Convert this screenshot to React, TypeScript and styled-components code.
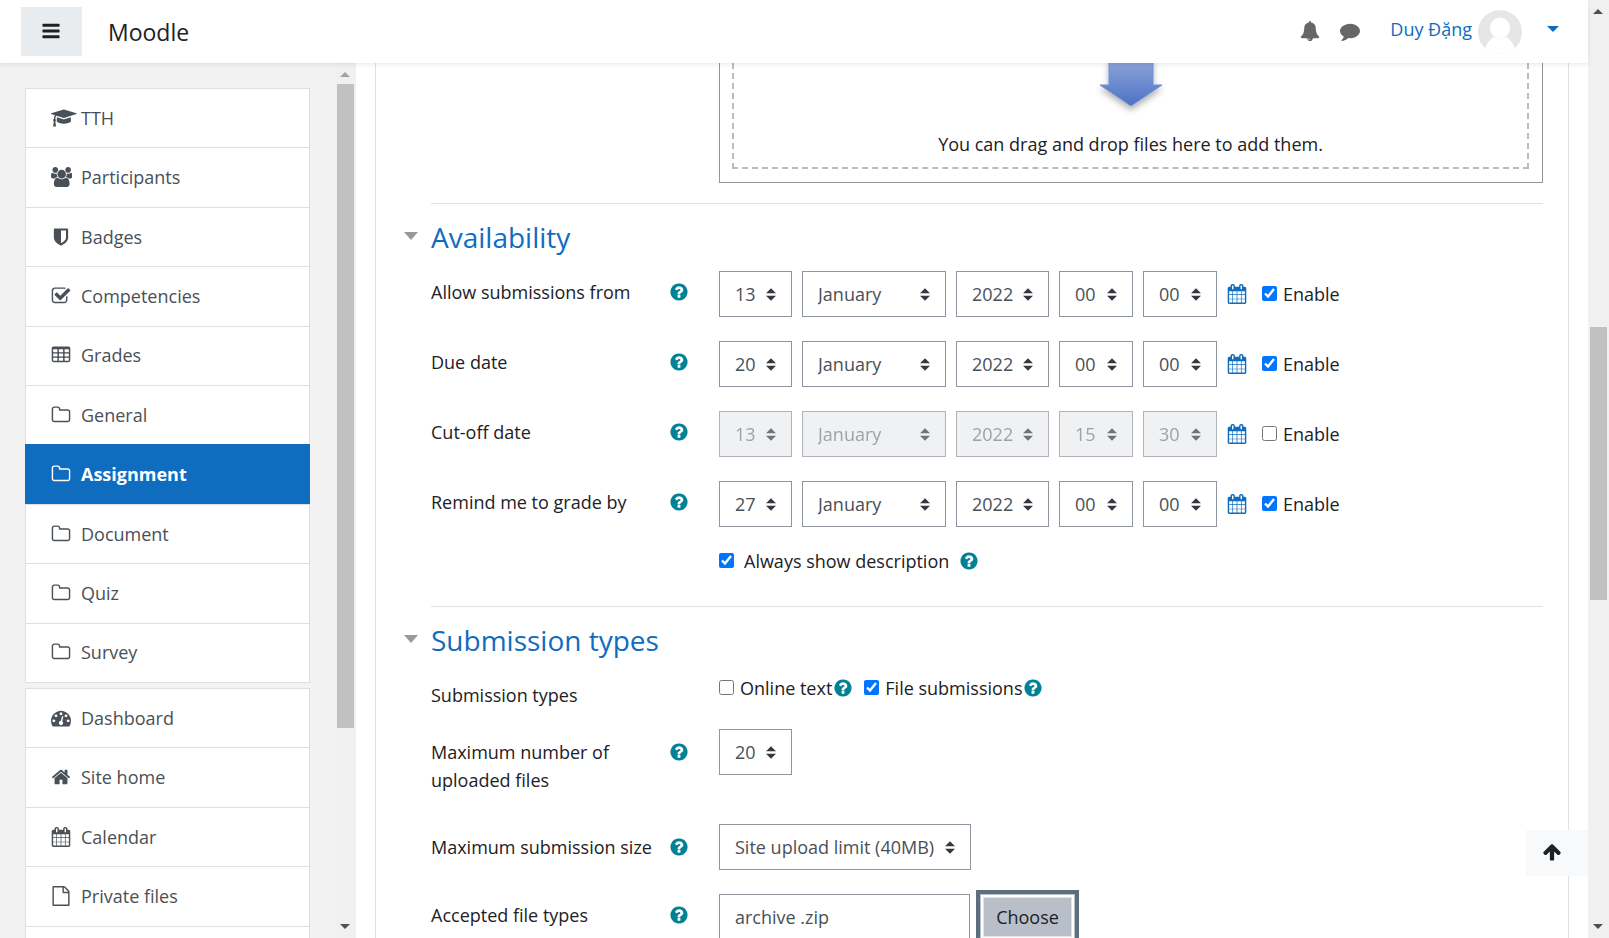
import React from 'react';
import styled, { createGlobalStyle, css } from 'styled-components';

const GlobalStyle = createGlobalStyle`
  *, *::before, *::after { box-sizing: border-box; }
  body {
    margin: 0;
    background: #fff;
    color: #1d2125;
    font-family: "Open Sans", "Noto Sans", sans-serif;
    font-size: 18px;
    font-weight: 380;
    line-height: 28px;
  }
  button, input, select { font: inherit; color: inherit; }
`;

/* ---------- icons ---------- */

type Glyph = { w?: number; d: string };

const glyphs: Record<string, Glyph> = {
  cap: {
    w: 2304,
    d: 'M1774 836l18 316q4 69-82 128t-235 93.5-323 34.5-323-34.5-235-93.5-82-128l18-316 574 181q22 7 48 7t48-7zm530-324q0 23-22 31l-1120 352q-4 1-10 1t-10-1l-652-206q-43 34-71 111.5t-34 178.5q63 36 63 109 0 69-58 107l58 433q2 14-8 25-9 11-24 11h-192q-15 0-24-11-10-11-8-25l58-433q-58-38-58-107 0-73 65-111 11-207 98-330l-333-104q-22-8-22-31t22-31l1120-352q4-1 10-1t10 1l1120 352q22 8 22 31z',
  },
  users: {
    w: 1920,
    d: 'M593 896q-162 5-265 128h-134q-82 0-138-40.5t-56-118.5q0-353 124-353 6 0 43.5 21t97.5 42.5 119 21.5q67 0 133-23-5 37-5 66 0 139 81 256zm1071 637q0 120-73 189.5t-194 69.5h-874q-121 0-194-69.5t-73-189.5q0-53 3.5-103.5t14-109 26.5-108.5 43-97.5 62-81 85.5-53.5 111.5-20q10 0 43 21.5t73 48 107 48 135 21.5 135-21.5 107-48 73-48 43-21.5q61 0 111.5 20t85.5 53.5 62 81 43 97.5 26.5 108.5 14 109 3.5 103.5zm-1024-1277q0 106-75 181t-181 75-181-75-75-181 75-181 181-75 181 75 75 181zm704 384q0 159-112.5 271.5t-271.5 112.5-271.5-112.5-112.5-271.5 112.5-271.5 271.5-112.5 271.5 112.5 112.5 271.5zm576 225q0 78-56 118.5t-138 40.5h-134q-103-123-265-128 81-117 81-256 0-29-5-66 66 23 133 23 59 0 119-21.5t97.5-42.5 43.5-21q124 0 124 353zm-128-609q0 106-75 181t-181 75-181-75-75-181 75-181 181-75 181 75 75 181z',
  },
  shield: {
    d: 'M1344 960v-640h-448v1137q119-63 213-137 235-184 235-360zm192-768v768q0 86-33.5 170.5t-83 150-118 127.5-126.5 103-121 77.5-89.5 49.5-42.5 20q-12 6-26 6t-26-6q-16-7-42.5-20t-89.5-49.5-121-77.5-126.5-103-118-127.5-83-150-33.5-170.5v-768q0-26 19-45t45-19h1152q26 0 45 19t19 45z',
  },
  check: {
    d: 'M1472 930v318q0 119-84.5 203.5t-203.5 84.5h-832q-119 0-203.5-84.5t-84.5-203.5v-832q0-119 84.5-203.5t203.5-84.5h832q63 0 117 25 15 7 18 23 3 17-9 29l-49 49q-10 10-23 10-3 0-9-2-23-6-45-6h-832q-66 0-113 47t-47 113v832q0 66 47 113t113 47h832q66 0 113-47t47-113v-254q0-13 9-22l64-64q10-10 23-10 6 0 12 3 20 8 20 29zm231-489l-814 814q-24 24-57 24t-57-24l-430-430q-24-24-24-57t24-57l110-110q24-24 57-24t57 24l263 263 647-647q24-24 57-24t57 24l110 110q24 24 24 57t-24 57z',
  },
  table: {
    d: 'M576 1376v-192q0-14-9-23t-23-9h-320q-14 0-23 9t-9 23v192q0 14 9 23t23 9h320q14 0 23-9t9-23zm0-384v-192q0-14-9-23t-23-9h-320q-14 0-23 9t-9 23v192q0 14 9 23t23 9h320q14 0 23-9t9-23zm512 384v-192q0-14-9-23t-23-9h-320q-14 0-23 9t-9 23v192q0 14 9 23t23 9h320q14 0 23-9t9-23zm-512-768v-192q0-14-9-23t-23-9h-320q-14 0-23 9t-9 23v192q0 14 9 23t23 9h320q14 0 23-9t9-23zm512 384v-192q0-14-9-23t-23-9h-320q-14 0-23 9t-9 23v192q0 14 9 23t23 9h320q14 0 23-9t9-23zm512 384v-192q0-14-9-23t-23-9h-320q-14 0-23 9t-9 23v192q0 14 9 23t23 9h320q14 0 23-9t9-23zm-512-768v-192q0-14-9-23t-23-9h-320q-14 0-23 9t-9 23v192q0 14 9 23t23 9h320q14 0 23-9t9-23zm512 384v-192q0-14-9-23t-23-9h-320q-14 0-23 9t-9 23v192q0 14 9 23t23 9h320q14 0 23-9t9-23zm0-384v-192q0-14-9-23t-23-9h-320q-14 0-23 9t-9 23v192q0 14 9 23t23 9h320q14 0 23-9t9-23zm128-320v1088q0 66-47 113t-113 47h-1344q-66 0-113-47t-47-113v-1088q0-66 47-113t113-47h1344q66 0 113 47t47 113z',
  },
  folder: {
    d: 'M1600 1312v-704q0-40-28-68t-68-28h-704q-40 0-68-28t-28-68v-64q0-40-28-68t-68-28h-320q-40 0-68 28t-28 68v960q0 40 28 68t68 28h1216q40 0 68-28t28-68zm128-704v704q0 92-66 158t-158 66h-1216q-92 0-158-66t-66-158v-960q0-92 66-158t158-66h320q92 0 158 66t66 158v32h672q92 0 158 66t66 158z',
  },
  gauge: {
    d: 'M384 1152q0-53-37.5-90.5t-90.5-37.5-90.5 37.5-37.5 90.5 37.5 90.5 90.5 37.5 90.5-37.5 37.5-90.5zm192-448q0-53-37.5-90.5t-90.5-37.5-90.5 37.5-37.5 90.5 37.5 90.5 90.5 37.5 90.5-37.5 37.5-90.5zm428 481l101-382q6-26-7.5-48.5t-38.5-29.5-48 6.5-30 39.5l-101 382q-60 5-107 43.5t-63 98.5q-20 77 20 146t117 89 146-20 89-117q16-60-6-117t-72-91zm660-33q0-53-37.5-90.5t-90.5-37.5-90.5 37.5-37.5 90.5 37.5 90.5 90.5 37.5 90.5-37.5 37.5-90.5zm-640-640q0-53-37.5-90.5t-90.5-37.5-90.5 37.5-37.5 90.5 37.5 90.5 90.5 37.5 90.5-37.5 37.5-90.5zm448 192q0-53-37.5-90.5t-90.5-37.5-90.5 37.5-37.5 90.5 37.5 90.5 90.5 37.5 90.5-37.5 37.5-90.5zm320 448q0 261-141 483-19 29-54 29h-1402q-35 0-54-29-141-221-141-483 0-182 71-348t191-286 286-191 348-71 348 71 286 191 191 286 71 348z',
  },
  home: {
    d: 'M1472 992v480q0 26-19 45t-45 19h-384v-384h-256v384h-384q-26 0-45-19t-19-45v-480q0-1 .5-3t.5-3l575-474 575 474q1 2 1 6zm223-69l-62 74q-8 9-21 11h-3q-13 0-21-7l-692-577-692 577q-12 8-24 7-13-2-21-11l-62-74q-8-10-7-23.5t11-21.5l719-599q32-26 76-26t76 26l244 204v-195q0-14 9-23t23-9h192q14 0 23 9t9 23v408l219 182q10 8 11 21.5t-7 23.5z',
  },
  calendar: {
    d: 'M192 1664h288v-288h-288v288zm352 0h320v-288h-320v288zm-352-352h288v-320h-288v320zm352 0h320v-320h-320v320zm-352-384h288v-288h-288v288zm736 736h320v-288h-320v288zm-384-736h320v-288h-320v288zm768 736h288v-288h-288v288zm-384-352h320v-320h-320v320zm-352-864v-288q0-13-9.5-22.5t-22.5-9.5h-64q-13 0-22.5 9.5t-9.5 22.5v288q0 13 9.5 22.5t22.5 9.5h64q13 0 22.5-9.5t9.5-22.5zm736 864h288v-320h-288v320zm-384-384h320v-288h-320v288zm384 0h288v-288h-288v288zm32-480v-288q0-13-9.5-22.5t-22.5-9.5h-64q-13 0-22.5 9.5t-9.5 22.5v288q0 13 9.5 22.5t22.5 9.5h64q13 0 22.5-9.5t9.5-22.5zm384-64v1280q0 52-38 90t-90 38h-1408q-52 0-90-38t-38-90v-1280q0-52 38-90t90-38h128v-96q0-66 47-113t113-47h64q66 0 113 47t47 113v96h384v-96q0-66 47-113t113-47h64q66 0 113 47t47 113v96h128q52 0 90 38t38 90z',
  },
  file: {
    d: 'M1596 380q28 28 48 76t20 88v1152q0 40-28 68t-68 28h-1344q-40 0-68-28t-28-68v-1600q0-40 28-68t68-28h896q40 0 88 20t76 48zm-444-244v376h376q-10-29-22-41l-313-313q-12-12-41-22zm384 1528v-1024h-416q-40 0-68-28t-28-68v-416h-768v1536h1280z',
  },
  bars: {
    d: 'M1664 1344v128q0 26-19 45t-45 19h-1408q-26 0-45-19t-19-45v-128q0-26 19-45t45-19h1408q26 0 45 19t19 45zm0-512v128q0 26-19 45t-45 19h-1408q-26 0-45-19t-19-45v-128q0-26 19-45t45-19h1408q26 0 45 19t19 45zm0-512v128q0 26-19 45t-45 19h-1408q-26 0-45-19t-19-45v-128q0-26 19-45t45-19h1408q26 0 45 19t19 45z',
  },
  bell: {
    d: 'M912 1696q0-16-16-16-59 0-101.5-42.5t-42.5-101.5q0-16-16-16t-16 16q0 73 51.5 124.5t124.5 51.5q16 0 16-16zm816-288q0 52-38 90t-90 38h-448q0 106-75 181t-181 75-181-75-75-181h-448q-52 0-90-38t-38-90q50-42 91-88t85-119.5 74.5-158.5 50-206 19.5-260q0-152 117-282.5t307-158.5q-8-19-8-39 0-40 28-68t68-28 68 28 28 68q0 20-8 39 190 28 307 158.5t117 282.5q0 139 19.5 260t50 206 74.5 158.5 85 119.5 91 88z',
  },
  comment: {
    d: 'M1792 896q0 174-120 321.5t-326 233-450 85.5q-70 0-145-8-198 175-460 242-49 14-114 22-17 2-30.5-9t-17.5-29v-1q-3-4-.5-12t2-10 4.5-9.5l6-9 7-8.5 8-9q7-8 31-34.5t34.5-38 31-39.5 32.5-51 27-59 26-76q-157-89-247.5-220t-90.5-281q0-130 71-248.5t191-204.5 286-136.5 348-50.5q244 0 450 85.5t326 233 120 321.5z',
  },
  help: {
    d: 'M1024 1376v-192q0-14-9-23t-23-9h-192q-14 0-23 9t-9 23v192q0 14 9 23t23 9h192q14 0 23-9t9-23zm256-672q0-88-55.5-163t-138.5-116-170-41q-243 0-371 213-15 24 8 42l132 100q7 6 19 6 16 0 25-12 53-68 86-92 34-24 86-24 48 0 85.5 26t37.5 59q0 38-20 61t-68 45q-63 28-115.5 86.5t-52.5 125.5v36q0 14 9 23t23 9h192q14 0 23-9t9-23q0-19 21.5-49.5t54.5-49.5q32-18 49-28.5t46-35 44.5-48 28-60.5 12.5-81zm384 192q0 209-103 385.5t-279.5 279.5-385.5 103-385.5-103-279.5-279.5-103-385.5 103-385.5 279.5-279.5 385.5-103 385.5 103 279.5 279.5 103 385.5z',
  },
  up: {
    d: 'M1675 971q0 51-37 90l-75 75q-38 38-91 38-54 0-90-38l-294-293v704q0 52-37.5 84.5t-90.5 32.5h-128q-53 0-90.5-32.5t-37.5-84.5v-704l-294 293q-36 38-90 38t-90-38l-75-75q-38-38-38-90 0-53 38-91l651-651q35-37 90-37 54 0 91 37l651 651q37 39 37 91z',
  },
};

const Svg = styled.svg`
  display: block;
  height: 20px;
  flex: none;
  fill: currentColor;
`;

function Icon({ name }: { name: string }) {
  const g = glyphs[name];
  return (
    <Svg viewBox={`0 0 ${g.w ?? 1792} 1792`} aria-hidden="true">
      <path d={g.d} />
    </Svg>
  );
}

/* ---------- shell ---------- */

const Shell = styled.div`
  display: grid;
  grid-template-columns: minmax(0, 1fr) 21px;
  height: 100vh;
  overflow: hidden;
`;

const Page = styled.div`
  display: flex;
  flex-direction: column;
  min-height: 0;
`;

const Header = styled.header`
  position: relative;
  z-index: 2;
  display: flex;
  align-items: center;
  flex: none;
  height: 63px;
  padding: 0 29px 0 21px;
  background: #fff;
  box-shadow: 0 2px 4px rgba(0, 0, 0, 0.08);
`;

const MenuButton = styled.button`
  display: grid;
  place-items: center;
  width: 61px;
  height: 49px;
  padding: 0 1px 1px 0;
  border: 0;
  background: #e9ecef;
  cursor: pointer;
`;

const Brand = styled.a`
  margin-left: 26px;
  font-size: 23px;
  line-height: 30px;
  color: #1d2125;
  text-decoration: none;
`;

const HeaderTools = styled.div`
  display: flex;
  align-items: center;
  gap: 20px;
  margin-left: auto;
`;

const IconButton = styled.button`
  display: block;
  padding: 0 0 1px;
  border: 0;
  background: none;
  color: #666;
  cursor: pointer;
`;

const UserButton = styled.button`
  display: flex;
  align-items: center;
  gap: 6px;
  margin-left: 10px;
  padding: 0;
  border: 0;
  background: none;
  color: #0f6cbf;
  cursor: pointer;
`;

const UserName = styled.span`
  padding-bottom: 5px;
`;

const Avatar = styled.svg`
  display: block;
  width: 44px;
  height: 44px;
`;

const Caret = styled.span`
  margin: 0 0 6px 19px;
  border: 6px solid transparent;
  border-top-color: currentColor;
  border-bottom: 0;
`;

const Body = styled.div`
  display: grid;
  grid-template-columns: 335px 21px minmax(0, 1fr);
  flex: 1;
  min-height: 0;
  overflow: hidden;
`;

/* ---------- scroll bars ---------- */

const Track = styled.div`
  display: flex;
  flex-direction: column;
  align-items: center;
  min-height: 0;
  padding: 9px 1px 9px 0;
  background: #f0f0f0;
`;

const Arrow = styled.span<{ $down?: boolean; $dim?: boolean }>`
  flex: none;
  border: 5px solid transparent;
  ${(p) =>
    p.$down
      ? css`
          margin-top: auto;
          border-bottom: 0;
          border-top-color: #505050;
        `
      : css`
          border-top: 0;
          border-bottom-color: ${p.$dim ? '#a3a3a3' : '#505050'};
        `}
`;

const Thumb = styled.div<{ $start: number; $size: number }>`
  flex: none;
  width: 17px;
  height: ${(p) => p.$size}vh;
  margin-top: ${(p) => p.$start}px;
  background: #c1c1c1;
`;

/* ---------- sidebar ---------- */

const Sidebar = styled.nav`
  display: flex;
  flex-direction: column;
  gap: 5px;
  min-height: 0;
  overflow: hidden;
  padding: 25px 25px 0;
  background: #f2f2f2;
`;

const NavList = styled.ul<{ $height: number }>`
  display: flex;
  flex-direction: column;
  flex: none;
  min-height: ${(p) => p.$height}px;
  margin: 0;
  padding: 0 0 1px;
  list-style: none;
  background: #dfdfdf;
`;

const NavItem = styled.li<{ $active?: boolean }>`
  display: flex;
  flex: 1;
  border: 1px solid ${(p) => (p.$active ? '#0f6cbf' : '#dfdfdf')};
  border-bottom: 0;
  background: ${(p) => (p.$active ? '#0f6cbf' : '#fff')};
  color: ${(p) => (p.$active ? '#fff' : '#495057')};
  font-weight: ${(p) => (p.$active ? 700 : 'inherit')};
`;

const NavLink = styled.a`
  display: flex;
  align-items: center;
  flex: 1;
  gap: 10px;
  padding: 0 25px 1px;
  color: inherit;
  text-decoration: none;
`;

const NavIcon = styled.span`
  display: flex;
  justify-content: safe center;
  width: 20px;
`;

/* ---------- form ---------- */

const Main = styled.main`
  position: relative;
  min-height: 0;
  overflow: hidden;
  padding: 0 19px;
  background: #fff;
`;

const Card = styled.form`
  min-height: 100%;
  padding: 0 25px 0 55px;
  border: 1px solid #dee2e6;
  border-width: 0 1px;
`;

const FormRow = styled.div<{ $tight?: boolean }>`
  display: grid;
  grid-template-columns: 258px minmax(0, 1fr);
  column-gap: 30px;
  align-items: start;
  margin-bottom: ${(p) => (p.$tight ? 20 : 24)}px;
`;

const labelPadding = {
  normal: '7px 0',
  tight: '7px 0 0',
  low: '9px 0 6px',
};

const LabelCell = styled.div<{ $fit?: keyof typeof labelPadding }>`
  display: flex;
  justify-content: space-between;
  gap: 10px;
  padding: ${(p) => labelPadding[p.$fit ?? 'normal']};
`;

const HelpButton = styled.button`
  display: flex;
  align-items: center;
  flex: none;
  height: 28px;
  padding: 0;
  border: 0;
  background: none;
  color: #008196;
  cursor: pointer;
`;

const Controls = styled.div<{ $gap?: number }>`
  grid-column: 2;
  display: flex;
  align-items: center;
  gap: ${(p) => p.$gap ?? 10}px;
`;

const chevrons = `url("data:image/svg+xml,${encodeURIComponent(
  "<svg xmlns='http://www.w3.org/2000/svg' width='4' height='5' viewBox='0 0 4 5'><path fill='#343a40' d='M2 0L0 2h4zm0 5L0 3h4z'/></svg>"
)}")`;

const Select = styled.select<{ $width: number }>`
  appearance: none;
  width: ${(p) => p.$width}px;
  height: 46px;
  padding: 0 15px;
  border: 1px solid #8f959e;
  border-radius: 0;
  background: #fff ${chevrons} no-repeat right 15px center / 10px 13px;
  color: #495057;

  &:disabled {
    opacity: 0.7;
    background-color: #e9ecef;
    color: #747b83;
  }
`;

const CalendarLink = styled.a`
  display: block;
  color: #0f6cbf;
`;

const CheckLabel = styled.label<{ $gap?: number; $indent?: number }>`
  display: flex;
  align-items: center;
  gap: ${(p) => p.$gap ?? 6}px;
  margin-left: ${(p) => p.$indent ?? 0}px;
`;

const Checkbox = styled.input.attrs({ type: 'checkbox' })`
  width: 15px;
  height: 15px;
  margin: 0 0 2px;
`;

const Picker = styled.div`
  grid-column: 2;
  height: 120px;
  padding: 0 13px 13px 12px;
  border: 1px solid #8f959e;
  border-top: 0;
`;

const DropZone = styled.div`
  display: flex;
  flex-direction: column;
  align-items: center;
  justify-content: space-between;
  height: 100%;
  padding-bottom: 9px;
  border: 2px dashed #bbb;
  border-top: 0;
`;

const DropArrow = styled.svg`
  display: block;
  width: 72px;
  height: 56px;
`;

const Section = styled.fieldset`
  min-width: 0;
  margin: 0;
  padding: 16px 0 7px;
  border: 0;
  border-top: 1px solid #dee2e6;
`;

const Heading = styled.h3`
  display: flex;
  align-items: center;
  margin: 0 0 17px -27px;
  font-size: 28px;
  font-weight: 400;
  line-height: 34px;
`;

const HeadingLink = styled.a`
  display: flex;
  align-items: center;
  gap: 13px;
  color: #0f6cbf;
  text-decoration: none;

  &::before {
    content: '';
    margin-bottom: 2px;
    border: 8px solid transparent;
    border-width: 8px 7px 0;
    border-top-color: #999;
  }
`;

const TextInput = styled.input`
  width: 251px;
  height: 46px;
  padding: 0 15px;
  border: 1px solid #8f959e;
  color: #495057;
`;

const ChooseButton = styled.button`
  width: 95px;
  height: 46px;
  padding: 0;
  border: 1px solid #b8bfc9;
  background: #b8bfc9;
  color: #1d2125;
  box-shadow: 0 0 0 4px #5d6e7f, inset 0 0 0 2px #fff, inset 0 0 0 3px #dfe3e8;
`;

const TopButton = styled.button`
  position: absolute;
  right: 0;
  bottom: 62px;
  display: grid;
  place-items: center;
  width: 62px;
  height: 46px;
  padding: 0 11px 2px 0;
  border: 0;
  background: #f8f9fa;
  color: #1d2125;
`;

const courseItems = [
  ['cap', 'TTH'],
  ['users', 'Participants'],
  ['shield', 'Badges'],
  ['check', 'Competencies'],
  ['table', 'Grades'],
  ['folder', 'General'],
  ['folder', 'Assignment'],
  ['folder', 'Document'],
  ['folder', 'Quiz'],
  ['folder', 'Survey'],
];

const siteItems = [
  ['gauge', 'Dashboard'],
  ['home', 'Site home'],
  ['calendar', 'Calendar'],
  ['file', 'Private files'],
];

const dates = [
  { label: 'Allow submissions from', values: ['13', 'January', '2022', '00', '00'], on: true },
  { label: 'Due date', values: ['20', 'January', '2022', '00', '00'], on: true },
  { label: 'Cut-off date', values: ['13', 'January', '2022', '15', '30'], on: false },
  { label: 'Remind me to grade by', values: ['27', 'January', '2022', '00', '00'], on: true },
];

const dateParts = [
  { name: 'day', width: 73 },
  { name: 'month', width: 144 },
  { name: 'year', width: 93 },
  { name: 'hour', width: 74 },
  { name: 'minute', width: 74 },
];

function NavEntry({ icon, text }: { icon: string; text: string }) {
  return (
    <NavItem $active={text === 'Assignment'}>
      <NavLink href="#">
        <NavIcon>
          <Icon name={icon} />
        </NavIcon>
        {text}
      </NavLink>
    </NavItem>
  );
}

function Help({ topic }: { topic: string }) {
  return (
    <HelpButton type="button" aria-label={`Help with ${topic}`}>
      <Icon name="help" />
    </HelpButton>
  );
}

function DateRow({ label, values, on, last }: { label: string; values: string[]; on: boolean; last: boolean }) {
  const [enabled, setEnabled] = React.useState(on);
  return (
    <FormRow $tight={last}>
      <LabelCell>
        <span>{label}</span>
        <Help topic={label} />
      </LabelCell>
      <Controls>
        {dateParts.map((part, i) => (
          <Select key={part.name} $width={part.width} disabled={!enabled} aria-label={`${label} ${part.name}`}>
            <option>{values[i]}</option>
          </Select>
        ))}
        <CalendarLink href="#" aria-label={`${label} calendar`}>
          <Icon name="calendar" />
        </CalendarLink>
        <CheckLabel $indent={5}>
          <Checkbox checked={enabled} onChange={() => setEnabled(!enabled)} />
          Enable
        </CheckLabel>
      </Controls>
    </FormRow>
  );
}

export default function App() {
  return (
    <Shell>
      <GlobalStyle />
      <Page>
        <Header>
          <MenuButton type="button" aria-label="Side panel">
            <Icon name="bars" />
          </MenuButton>
          <Brand href="#">Moodle</Brand>
          <HeaderTools>
            <IconButton type="button" aria-label="Notifications">
              <Icon name="bell" />
            </IconButton>
            <IconButton type="button" aria-label="Messages">
              <Icon name="comment" />
            </IconButton>
            <UserButton type="button">
              <UserName>Duy Đặng</UserName>
              <Avatar viewBox="0 0 44 44" aria-hidden="true">
                <defs>
                  <clipPath id="avatar-clip">
                    <circle cx="22" cy="22" r="22" />
                  </clipPath>
                </defs>
                <g clipPath="url(#avatar-clip)">
                  <rect width="44" height="44" fill="#e6e6e6" />
                  <ellipse cx="22" cy="18" rx="10" ry="10.500" fill="#fff" />
                  <path d="M7 39q2-8 9-12 6 3 12 0 7 4 9 12v5H7z" fill="#fff" />
                </g>
              </Avatar>
              <Caret />
            </UserButton>
          </HeaderTools>
        </Header>

        <Body>
          <Sidebar aria-label="Navigation">
            <NavList $height={595}>
              {courseItems.map(([icon, text]) => (
                <NavEntry key={text} icon={icon} text={text} />
              ))}
            </NavList>
            <NavList $height={298}>
              {siteItems.map(([icon, text]) => (
                <NavEntry key={text} icon={icon} text={text} />
              ))}
              <NavItem />
            </NavList>
          </Sidebar>
          <Track aria-hidden="true">
            <Arrow $dim />
            <Thumb $start={7} $size={68.66} />
            <Arrow $down />
          </Track>

          <Main>
            <Card>
              <FormRow $tight>
                <Picker>
                  <DropZone>
                    <DropArrow viewBox="0 0 72 56" aria-hidden="true">
                      <defs>
                        <linearGradient id="drop-fill" x1="0" y1="0" x2="0" y2="1">
                          <stop offset="0" stopColor="#8ea4d8" />
                          <stop offset="1" stopColor="#4d73c6" />
                        </linearGradient>
                        <filter id="drop-shadow" x="-20%" y="-20%" width="140%" height="150%">
                          <feDropShadow dx="0" dy="4" stdDeviation="3" floodOpacity="0.3" />
                        </filter>
                      </defs>
                      <path
                        d="M14-4h44v26h9L36 43 5 22h9z"
                        fill="url(#drop-fill)"
                        stroke="#6f8fd6"
                        filter="url(#drop-shadow)"
                      />
                    </DropArrow>
                    <span>You can drag and drop files here to add them.</span>
                  </DropZone>
                </Picker>
              </FormRow>

              <Section>
                <Heading>
                  <HeadingLink href="#">Availability</HeadingLink>
                </Heading>
                {dates.map((d, i) => (
                  <DateRow key={d.label} {...d} last={i === dates.length - 1} />
                ))}
                <FormRow>
                  <Controls>
                    <CheckLabel $gap={10}>
                      <Checkbox defaultChecked />
                      Always show description
                    </CheckLabel>
                    <Help topic="Always show description" />
                  </Controls>
                </FormRow>
              </Section>

              <Section>
                <Heading>
                  <HeadingLink href="#">Submission types</HeadingLink>
                </Heading>
                <FormRow $tight>
                  <LabelCell $fit="tight">
                    <span>Submission types</span>
                  </LabelCell>
                  <Controls $gap={1}>
                    <CheckLabel>
                      <Checkbox />
                      Online text
                    </CheckLabel>
                    <Help topic="Online text" />
                    <CheckLabel $indent={10}>
                      <Checkbox defaultChecked />
                      File submissions
                    </CheckLabel>
                    <Help topic="File submissions" />
                  </Controls>
                </FormRow>
                <FormRow>
                  <LabelCell $fit="low">
                    <label htmlFor="max-files">Maximum number of uploaded files</label>
                    <Help topic="Maximum number of uploaded files" />
                  </LabelCell>
                  <Controls>
                    <Select id="max-files" $width={73}>
                      <option>20</option>
                    </Select>
                  </Controls>
                </FormRow>
                <FormRow>
                  <LabelCell $fit="low">
                    <label htmlFor="max-size">Maximum submission size</label>
                    <Help topic="Maximum submission size" />
                  </LabelCell>
                  <Controls>
                    <Select id="max-size" $width={252}>
                      <option>Site upload limit (40MB)</option>
                    </Select>
                  </Controls>
                </FormRow>
                <FormRow>
                  <LabelCell>
                    <label htmlFor="file-types">Accepted file types</label>
                    <Help topic="Accepted file types" />
                  </LabelCell>
                  <Controls>
                    <TextInput id="file-types" type="text" defaultValue="archive .zip" />
                    <ChooseButton type="button">Choose</ChooseButton>
                  </Controls>
                </FormRow>
              </Section>
            </Card>
            <TopButton type="button" aria-label="Back to top">
              <Icon name="up" />
            </TopButton>
          </Main>
        </Body>
      </Page>
      <Track aria-hidden="true">
        <Arrow />
        <Thumb $start={313} $size={29.1} />
        <Arrow $down />
      </Track>
    </Shell>
  );
}
